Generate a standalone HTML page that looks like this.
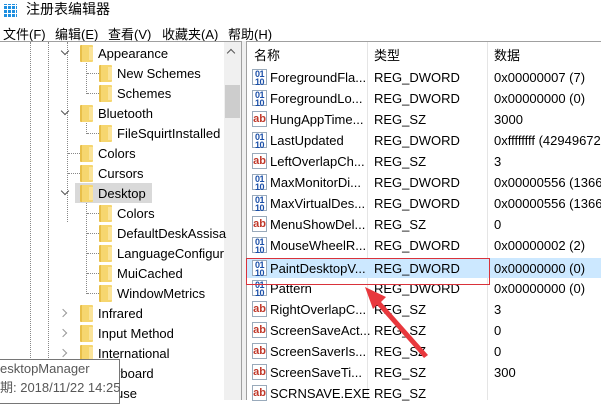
<!DOCTYPE html>
<html><head><meta charset="utf-8"><style>
*{margin:0;padding:0;box-sizing:border-box}
body{width:601px;height:400px;overflow:hidden;background:#fff;font-family:"Liberation Sans","Noto Sans CJK SC",sans-serif;font-size:13px;color:#000;position:relative}
.a{position:absolute;white-space:nowrap}
.fd{position:absolute;width:13px;height:17px;background:#f6d66f;border-left:2px solid #e8bf4a;border-radius:1px}
.fd:after{content:"";position:absolute;right:0;top:2px;width:4px;height:13px;background:#fbe49a}
.chev{position:absolute;width:6px;height:6px;border-right:1.5px solid #555;border-bottom:1.5px solid #555}
.dl{position:absolute;border-left:1px dotted #888}
.dh{position:absolute;border-top:1px dotted #888;width:12px}
.ic{position:absolute;width:15px;height:16px;font-size:9px;font-weight:bold;line-height:8px;text-align:center;border:1px solid #9ab;background:#fff}
.bin{color:#1a4fa8;letter-spacing:-0.5px}
.ab{color:#c0392b;font-size:11px;line-height:14px}
</style></head><body>
<div class="a" style="left:4px;top:4px;width:13px;height:13px;background:#1e8fe0"></div>
<div class="a" style="left:4px;top:4px;width:13px;height:13px;background:repeating-linear-gradient(90deg,transparent 0 3px,#fff 3px 4px),repeating-linear-gradient(0deg,transparent 0 3px,#fff 3px 4px)"></div>
<div class="a" style="left:26px;top:-1px;font-size:14px">注册表编辑器</div>
<div class="a" style="left:3px;top:24px">文件(F)</div>
<div class="a" style="left:55px;top:24px">编辑(E)</div>
<div class="a" style="left:108px;top:24px">查看(V)</div>
<div class="a" style="left:162px;top:24px">收藏夹(A)</div>
<div class="a" style="left:228px;top:24px">帮助(H)</div>
<div class="a" style="left:0;top:41px;width:242px;height:359px;border-top:1px solid #a0a0a0;border-right:1px solid #a0a0a0"></div>
<div class="a" style="left:242px;top:41px;width:4px;height:359px;background:#f0f0f0"></div>
<div class="a" style="left:246px;top:41px;width:355px;height:359px;border-top:1px solid #a0a0a0;border-left:1px solid #a0a0a0"></div>
<div class="a" style="left:224px;top:42px;width:17px;height:358px;background:#f0f0f0"></div>
<div class="a" style="left:228px;top:50px;width:6px;height:6px;border-left:1.5px solid #555;border-top:1.5px solid #555;transform:rotate(45deg)"></div>
<div class="a" style="left:225px;top:85px;width:15px;height:33px;background:#cdcdcd"></div>
<div class="dl" style="left:30px;top:42px;height:358px"></div>
<div class="dl" style="left:48px;top:42px;height:358px"></div>
<div class="dl" style="left:67px;top:42px;height:180px"></div>
<div class="dl" style="left:86px;top:63px;height:31px"></div>
<div class="dl" style="left:86px;top:123px;height:11px"></div>
<div class="dl" style="left:86px;top:203px;height:91px"></div>
<div id="tree"></div>
<script>
var t=[[0,"Appearance",1],[1,"New Schemes"],[1,"Schemes"],[0,"Bluetooth",1],[1,"FileSquirtInstalled"],[0,"Colors"],[0,"Cursors"],[0,"Desktop",1],[1,"Colors"],[1,"DefaultDeskAssisa"],[1,"LanguageConfigur"],[1,"MuiCached"],[1,"WindowMetrics"],[0,"Infrared",2],[0,"Input Method",2],[0,"International",2],[0,"Keyboard",2],[0,"Mouse",2]];
var h="";
t.forEach(function(r,i){var y=43+i*20;var fx=r[0]?99:80,tx=r[0]?117:98;
if(r[1]=="Desktop")h+='<div class="a" style="left:75px;top:'+y+'px;width:77px;height:20px;background:#d9d9d9"></div>';
if(r[2]==1)h+='<div class="chev" style="left:62px;top:'+(y+5)+'px;transform:rotate(45deg)"></div>';
else if(r[2]==2)h+='<div class="chev" style="left:60px;top:'+(y+7)+'px;transform:rotate(-45deg);border-color:#999"></div>';
else h+='<div class="dh" style="left:'+(fx-12)+'px;top:'+(y+10)+'px"></div>';
h+='<div class="fd" style="left:'+fx+'px;top:'+(y+2)+'px"></div><div class="a" style="left:'+tx+'px;top:'+(y+3)+'px">'+r[1]+'</div>';});
document.getElementById("tree").innerHTML=h;
</script>
<div class="a" style="left:367px;top:42px;height:358px;border-left:1px solid #e5e5e5"></div>
<div class="a" style="left:487px;top:42px;height:358px;border-left:1px solid #e5e5e5"></div>
<div class="a" style="left:254px;top:45px">名称</div>
<div class="a" style="left:374px;top:45px">类型</div>
<div class="a" style="left:494px;top:45px">数据</div>
<div class="a" style="left:247px;top:258px;width:354px;height:20px;background:#cce8ff"></div>
<div id="list"></div>
<script>
var L=[["ForegroundFla...",1,"0x00000007 (7)"],["ForegroundLo...",1,"0x00000000 (0)"],["HungAppTime...",0,"3000"],["LastUpdated",1,"0xffffffff (42949672"],["LeftOverlapCh...",0,"3"],["MaxMonitorDi...",1,"0x00000556 (1366)"],["MaxVirtualDes...",1,"0x00000556 (1366)"],["MenuShowDel...",0,"0"],["MouseWheelR...",1,"0x00000002 (2)"],["PaintDesktopV...",1,"0x00000000 (0)"],["Pattern",1,"0x00000000 (0)"],["RightOverlapC...",0,"3"],["ScreenSaveAct...",0,"0"],["ScreenSaverIs...",0,"0"],["ScreenSaveTi...",0,"300"],["SCRNSAVE.EXE",0,""]];
var g="";
L.forEach(function(r,i){var y=[67,88,109,130,151,172,193,214,235,258,278,299,320,341,362,383][i];
g+=(r[1]?'<div class="ic bin" style="left:252px;top:'+(y+2)+'px">01<br>10</div>':'<div class="ic ab" style="left:252px;top:'+(y+2)+'px">ab</div>');
g+='<div class="a" style="left:270px;top:'+(y+3)+'px">'+r[0]+'</div><div class="a" style="left:374px;top:'+(y+3)+'px">'+(r[1]?"REG_DWORD":"REG_SZ")+'</div><div class="a" style="left:494px;top:'+(y+3)+'px">'+r[2]+'</div>';});
document.getElementById("list").innerHTML=g;
</script>
<div class="a" style="left:246px;top:258px;width:244px;height:27px;border:1px solid #d9323a"></div>
<svg class="a" style="left:0;top:0" width="601" height="400"><path d="M428 355 L381 302 L386 297 L365 287 L373 309 L377 305 L424 358 Z" fill="#e8383d"/></svg>
<div class="a" style="left:-1px;top:359px;width:121px;height:45px;background:#fff;border:1px solid #767676"></div>
<div class="a" style="left:0;top:361px;font-size:13px;color:#575757">esktopManager</div>
<div class="a" style="left:0;top:377px;font-size:13px;color:#575757">期: 2018/11/22 14:25</div>
</body></html>
